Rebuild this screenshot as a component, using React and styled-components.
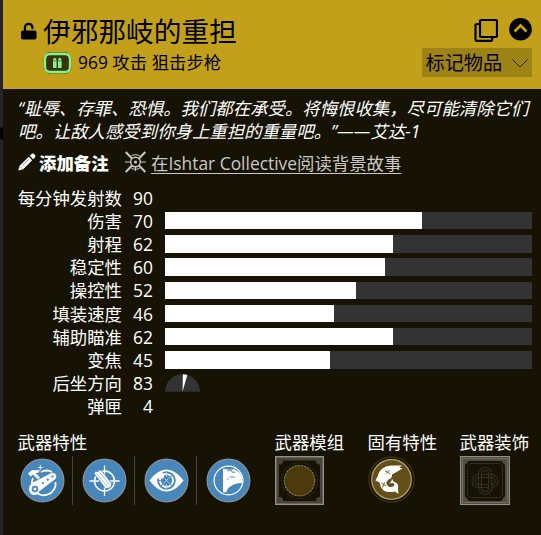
import React from 'react';
import styled, { createGlobalStyle } from 'styled-components';

const GlobalStyle = createGlobalStyle`
  * { box-sizing: border-box; }
  body {
    margin: 0;
    background: #252529;
    color: #fff;
    overflow: hidden;
    font-family: "Open Sans", "Noto Sans CJK SC", sans-serif;
    font-size: 17.4px;
    text-spacing-trim: space-all;
  }
  svg { display: block; flex: none; }
`;

const Page = styled.div`
  position: relative;
  height: 535px;
  padding-left: 3px;
`;

const EdgeDot = styled.div`
  position: absolute;
  left: 0;
  top: 127px;
  width: 3px;
  height: 13px;
  border-radius: 3px 0 0 3px;
  background: #000;
`;

const Card = styled.article`
  height: 535px;
  background: #161305;
`;

const Header = styled.header`
  display: flex;
  justify-content: space-between;
  height: 89px;
  padding: 0 9px 0 18px;
  background: #c3a019;
  color: #000;
`;

const Heading = styled.div`
  display: grid;
  grid-template-columns: 22px auto;
  grid-template-rows: 36px 25px;
  padding-top: 13px;
  align-items: center;
`;

const LockSlot = styled.div`
  padding-bottom: 1px;
`;

const Title = styled.h1`
  margin: 0;
  font-size: 27.7px;
  line-height: 36px;
  font-weight: 400;
  white-space: nowrap;
`;

const Subtitle = styled.div`
  grid-column: 2;
  display: flex;
  align-items: center;
  gap: 6px;
  line-height: 25px;
  padding-top: 2px;
  white-space: nowrap;
`;

const Actions = styled.div`
  display: flex;
  flex-direction: column;
  align-items: flex-end;
  padding-top: 16px;
`;

const ActionRow = styled.div`
  display: flex;
  align-items: flex-start;
  gap: 11px;
  height: 28px;
  padding-top: 2px;
`;

const TagSelect = styled.div`
  display: flex;
  align-items: center;
  justify-content: space-between;
  width: 110px;
  height: 29px;
  margin-top: 4px;
  padding: 1px 4px 0 3.5px;
  background: #9d8216;
  font-size: 19.2px;
  line-height: 28px;
`;

const Flavor = styled.p`
  margin: 0;
  padding: 8px 0 0 15px;
  height: 55px;
  font-style: italic;
  line-height: 23.4px;
  white-space: nowrap;
`;

const Links = styled.div`
  display: flex;
  align-items: center;
  height: 38px;
  padding: 0 0 2px 15px;
  white-space: nowrap;
`;

const NoteButton = styled.div`
  display: flex;
  align-items: center;
  gap: 4px;
  width: 107px;
  font-weight: 900;
`;

const NoteText = styled.span`
  margin-left: -1px;
`;

const LoreLink = styled.div`
  display: flex;
  align-items: center;
  gap: 5px;
  color: #c9c8c4;
`;

const LoreText = styled.span`
  text-decoration: underline;
  text-decoration-thickness: 1px;
  text-underline-offset: 3px;
`;

const Stats = styled.div`
  display: grid;
  grid-template-columns: 104px 31px 1fr;
  grid-auto-rows: 23.2px;
  align-items: center;
  margin-top: 4px;
  padding: 0 9px 0 15px;
`;

const StatLabel = styled.div`
  display: flex;
  justify-content: flex-end;
  padding-top: 1px;
  line-height: 23px;
  white-space: nowrap;
`;

const StatValue = styled(StatLabel)``;

const BarTrack = styled.div`
  height: 17.4px;
  margin-left: 12px;
  background: ${({ $empty }) => ($empty ? 'transparent' : '#333')};
`;

const BarFill = styled.div`
  height: 100%;
  background: #fff;
`;

const Sockets = styled.div`
  display: flex;
  padding-left: 15px;
  margin-top: 13px;
`;

const SocketGroup = styled.section`
  width: ${({ $width }) => $width}px;
`;

const SocketTitle = styled.div`
  height: 25px;
  line-height: 23px;
  margin-left: -0.5px;
  white-space: nowrap;
`;

const SocketRow = styled.div`
  display: flex;
`;

const PerkCell = styled.div`
  width: ${({ $first }) => ($first ? 55 : 62)}px;
  height: 49px;
  padding: 2px 0 0 ${({ $first }) => ($first ? 1.5 : 8.5)}px;
  border-right: ${({ $last }) => ($last ? 'none' : '1px solid #444444')};
`;

const LockIcon = () => (
  <svg width="16" height="18" viewBox="0 0 16 18">
    <rect x="0" y="8.5" width="15.5" height="9" rx="1.8" />
    <path d="M4 9V5.5a3.7 3.7 0 0 1 7.4 0v.7" fill="none" stroke="#000" strokeWidth="2.3" strokeLinecap="round" />
  </svg>
);

const AmmoIcon = () => (
  <svg width="29" height="22" viewBox="0 0 29 22">
    <path d="M5 .6H24L28.2 5V17L24 21.4H5L.8 17V5Z" fill="#3d340b" />
    <rect x="2" y="2" width="25" height="18" rx="5" fill="#3d300c" stroke="#7cf58d" strokeWidth="2.4" />
    <path d="M10 16V8.5Q10 6.5 11.8 5.6Q13.6 6.5 13.6 8.5V16ZM15 16V8.5Q15 6.5 16.8 5.6Q18.6 6.5 18.6 8.5V16Z" fill="#7cf58d" />
    <path d="M10 8.8h3.6M15 8.8h3.6" stroke="#3d300c" strokeWidth=".6" />
  </svg>
);

const CopyIcon = () => (
  <svg width="24" height="24" viewBox="0 0 24 24" fill="none" stroke="#000" strokeWidth="2.2">
    <rect x="6" y="2" width="17" height="17" rx="1" />
    <path d="M5 6H2.8Q1.5 6 1.5 7.3V21.2Q1.5 22.8 2.8 22.8H17Q18.2 22.8 18.2 21.2V20" />
  </svg>
);

const CollapseIcon = () => (
  <svg width="23" height="23" viewBox="0 0 23 23">
    <circle cx="11.5" cy="11.3" r="11.3" />
    <path d="M5.5 13.5L11.5 7.5L17.5 13.5" fill="none" stroke="#c3a019" strokeWidth="2.8" />
  </svg>
);

const ChevronIcon = () => (
  <svg width="16" height="9" viewBox="0 0 16 9">
    <path d="M.5 .5L8 8L15.5 .5" fill="none" stroke="#2b240b" strokeWidth="1" />
  </svg>
);

const PencilIcon = () => (
  <svg width="18" height="18" viewBox="0 0 18 18" fill="#fff">
    <path d="M11.8 2.8L13.8.8Q15 0 16.1 1L17 2Q18 3.2 17 4.3L15.2 6.2ZM10.8 3.8L14.2 7.2L5.2 16.2L.3 17.5L1.6 12.8Z" />
    <path d="M4.5 12.3L10.6 6.2M2.5 14l1.6 1.6" stroke="#161305" strokeWidth=".5" />
  </svg>
);

const IshtarIcon = () => (
  <svg width="21" height="22" viewBox="0 0 21 22" fill="none" stroke="#c9c8c4">
    <path d="M.7 1L7 7.5M20.3 1L14 7.5M.7 21L7 14.5M20.3 21L14 14.5" strokeWidth="2" />
    <path d="M6.5 4.5Q10.5 3 14.5 4.5M6.5 17.5Q10.5 19 14.5 17.5M0 11H5M16 11H21M10.5 16V20" strokeWidth="1.1" />
    <circle cx="10.5" cy="11" r="4.8" strokeWidth="1.4" />
    <circle cx="10.5" cy="11" r="1.6" fill="#c9c8c4" stroke="none" />
  </svg>
);

const RecoilIcon = () => (
  <svg width="35" height="18" viewBox="0 0 35 17.5">
    <path d="M0 17.5A17.5 17.5 0 0 1 35 17.5Z" fill="#333" />
    <path d="M17.5 17.5L17.9 0A17.5 17.5 0 0 1 22.3 .8Z" fill="#fff" />
  </svg>
);

const PerkIcon = ({ children }) => (
  <svg width="45" height="45" viewBox="0 0 45 45">
    <circle cx="22.5" cy="22.5" r="21.4" fill="#4787bc" stroke="#8b8f97" strokeWidth="1.2" />
    {children}
  </svg>
);

const BarrelGlyph = () => (
  <g>
    <path d="M13 20A12.5 12.5 0 0 0 23 37.3Q33 37 35.5 28V24M21 14Q27 11 32 14" fill="none" stroke="#fff" strokeWidth="1.8" />
    <path d="M12 25L30.5 15.5Q35 13.5 36.2 17.5Q36.7 20.5 34 22L19 33.5Q18 37.5 13.5 37Q9 36 9 31Q9.5 27 12 25Z" fill="#fff" />
    <circle cx="15" cy="31" r="3.3" fill="#4787bc" />
    <circle cx="15" cy="31" r="1.5" fill="#fff" />
    <path d="M22 25.5l1.8-1M26.8 22.2l1.8-1M31.5 19l1.8-1" stroke="#4787bc" strokeWidth="1.9" />
    <path d="M8 15.5L12 12L20 12.2L18 15H15.5L20 19.5L18 21.5L13 16.5L10.5 18.5Z" fill="#fff" />
    <path d="M20.3 7V12M17.8 9.5H22.8" stroke="#fff" strokeWidth=".8" />
  </g>
);

const RoundsGlyph = () => (
  <g>
    <circle cx="22.5" cy="23" r="10" fill="none" stroke="#fff" strokeWidth="1.5" />
    <path d="M22.5 7.5V18M22.5 28V38M7.5 23H17M28 23H37.5" stroke="#fff" strokeWidth="1.3" />
    <path d="M12 15.5L13.5 13L16 14L16.5 11.8L19.5 12.5L29.8 25.5L28.5 29.8L23.5 30.5Z" fill="#fff" stroke="#4787bc" strokeWidth=".8" />
    <path d="M14.7 15.5L25.2 28.5M17.5 14.2L27.5 26.5" stroke="#4787bc" strokeWidth=".5" />
  </g>
);

const EyeGlyph = () => (
  <g>
    <path d="M5.5 22.5Q13.5 11.5 22.5 11.5Q31.5 11.5 39.5 22.5Q31.5 33.5 22.5 33.5Q13.5 33.5 5.5 22.5Z" fill="#fff" />
    <circle cx="22.5" cy="22.5" r="9.3" fill="#4787bc" />
    <circle cx="22.5" cy="22.5" r="6.5" fill="none" stroke="#fff" strokeWidth="1.8" strokeDasharray="4.2 .9" />
    <path d="M19 19L26 26M26 19L19 26" stroke="#fff" strokeWidth=".7" strokeDasharray="2 1" />
    <path d="M22.5 14V19M22.5 26V31" stroke="#fff" strokeWidth=".6" />
    <circle cx="16.5" cy="17.5" r="3.6" fill="#fff" />
  </g>
);

const FlagGlyph = () => (
  <g>
    <circle cx="22.5" cy="22.5" r="14.4" fill="none" stroke="#fff" strokeWidth="1.2" />
    <path d="M17 10.8L22 11.5Q24.5 12.2 28.5 11L34 15Q37 20 36.5 25Q29 25 25 28Q21 30.5 20.5 34L17 34.3Z" fill="#fff" />
    <path d="M21 12.7H26V14.2H29.5M20.8 21H22.5M23.5 19H29" fill="none" stroke="#4787bc" strokeWidth=".9" />
  </g>
);

const ModIcon = () => (
  <svg width="49" height="49" viewBox="0 0 49 49">
    <rect x=".5" y=".5" width="48" height="48" fill="#47443a" stroke="#929189" />
    <rect x="1.5" y="1.5" width="46" height="46" fill="none" stroke="#65635a" />
    <path d="M8 4.5H41V6.5L43 8.5H45V41H43L41 43V45H8V43L6 41H4V8.5H6L8 6.5Z" fill="#161305" />
    <circle cx="24.5" cy="24.7" r="18" fill="none" stroke="#332d14" strokeWidth=".8" strokeDasharray="9 2" />
    <circle cx="24.5" cy="24.7" r="15.2" fill="#4b390b" stroke="#837646" strokeWidth="1.1" strokeDasharray="2.5 .8" />
    <path d="M24.5 12L37 24.7L24.5 37.4L12 24.7ZM24.5 16L33 24.7L24.5 33.4L16 24.7ZM24.5 20L29 24.7L24.5 29.4L20 24.7Z" fill="none" stroke="#564410" strokeWidth=".6" />
  </svg>
);

const IntrinsicIcon = () => (
  <svg width="49" height="49" viewBox="0 0 49 49">
    <circle cx="23.5" cy="23.5" r="22.6" fill="none" stroke="#3f330b" strokeWidth="1.3" />
    <circle cx="23.5" cy="23.5" r="19.8" fill="#635018" stroke="#b3a36d" strokeWidth="1.2" />
    <path d="M7.5 24.5L9.5 20.5Q11 15 14.5 12.5Q19 9 25 9.5H34L31.5 11.5L34.5 12.5L31 14.5Q27 17 24 18.5Q24.5 22 20.5 23.5L18.5 26Q18 29 21.5 31Q25.5 31.5 26.5 29L25.5 27L21.5 27.5Q24 25.5 24 22.5Q25 26 28.5 27Q31 29 30 32.5L30.5 38L27 35.5Q20 37 15.5 34.5Q12 31 11.5 26.5Z" fill="#fff" />
    <path d="M17 14.5L22 18M21.5 14L18 17.7M13.5 27L18 30M16.5 26.5L14.5 31.5" stroke="#635018" strokeWidth=".9" />
  </svg>
);

const OrnamentIcon = () => (
  <svg width="50" height="49" viewBox="0 0 50 49">
    <rect x=".5" y=".5" width="49" height="48" fill="#504d41" stroke="#929189" />
    <rect x="2.5" y="2.5" width="45" height="44" fill="none" stroke="#716f65" />
    <path d="M9 5H41L45 9V40L41 45H9L5 40V9Z" fill="#161305" />
    <rect x="7.5" y="7.5" width="35" height="34" rx="4" fill="none" stroke="#3c392d" strokeDasharray="2 1" />
    <g fill="none" stroke="#343022" strokeWidth="1.1">
      <rect x="18.5" y="11.5" width="13" height="27" rx="6.5" />
      <rect x="21.5" y="14.5" width="7" height="21" rx="3.5" />
      <path d="M18.5 18.5a6.5 6.5 0 0 0 0 13H28.5M21.5 21.5h-3a3.5 3.5 0 0 0 0 7H28.5M21.5 18.5H31.5a6.5 6.5 0 0 1 0 13M21.5 21.5H31.5a3.5 3.5 0 0 1 0 7" />
    </g>
  </svg>
);

const stats = [
  { label: '每分钟发射数', value: 90, kind: 'number' },
  { label: '伤害', value: 70 },
  { label: '射程', value: 62 },
  { label: '稳定性', value: 60 },
  { label: '操控性', value: 52 },
  { label: '填装速度', value: 46 },
  { label: '辅助瞄准', value: 62 },
  { label: '变焦', value: 45 },
  { label: '后坐方向', value: 83, kind: 'recoil' },
  { label: '弹匣', value: 4, kind: 'number' },
];

const perks = [BarrelGlyph, RoundsGlyph, EyeGlyph, FlagGlyph];

const Stat = ({ label, value, kind }) => (
  <>
    <StatLabel>{label}</StatLabel>
    <StatValue>{value}</StatValue>
    <BarTrack $empty={Boolean(kind)}>
      {!kind && <BarFill style={{ width: `${value}%` }} />}
      {kind === 'recoil' && <RecoilIcon />}
    </BarTrack>
  </>
);

export default function App() {
  return (
    <Page>
      <GlobalStyle />
      <EdgeDot />
      <Card>
        <Header>
          <Heading>
            <LockSlot><LockIcon /></LockSlot>
            <Title>伊邪那岐的重担</Title>
            <Subtitle><AmmoIcon /><span>969 攻击 狙击步枪</span></Subtitle>
          </Heading>
          <Actions>
            <ActionRow><CopyIcon /><CollapseIcon /></ActionRow>
            <TagSelect><span>标记物品</span><ChevronIcon /></TagSelect>
          </Actions>
        </Header>
        <Flavor>
          “耻辱、存罪、恐惧。我们都在承受。将悔恨收集，尽可能清除它们<br />
          吧。让敌人感受到你身上重担的重量吧。”——艾达-1
        </Flavor>
        <Links>
          <NoteButton><PencilIcon /><NoteText>添加备注</NoteText></NoteButton>
          <LoreLink><IshtarIcon /><LoreText>在Ishtar Collective阅读背景故事</LoreText></LoreLink>
        </Links>
        <Stats>
          {stats.map((stat) => <Stat key={stat.label} {...stat} />)}
        </Stats>
        <Sockets>
          <SocketGroup $width={257}>
            <SocketTitle>武器特性</SocketTitle>
            <SocketRow>
              {perks.map((Glyph, i) => (
                <PerkCell key={i} $first={i === 0} $last={i === perks.length - 1}>
                  <PerkIcon><Glyph /></PerkIcon>
                </PerkCell>
              ))}
            </SocketRow>
          </SocketGroup>
          <SocketGroup $width={93}>
            <SocketTitle>武器模组</SocketTitle>
            <ModIcon />
          </SocketGroup>
          <SocketGroup $width={92}>
            <SocketTitle>固有特性</SocketTitle>
            <IntrinsicIcon />
          </SocketGroup>
          <SocketGroup $width={75}>
            <SocketTitle>武器装饰</SocketTitle>
            <OrnamentIcon />
          </SocketGroup>
        </Sockets>
      </Card>
    </Page>
  );
}
